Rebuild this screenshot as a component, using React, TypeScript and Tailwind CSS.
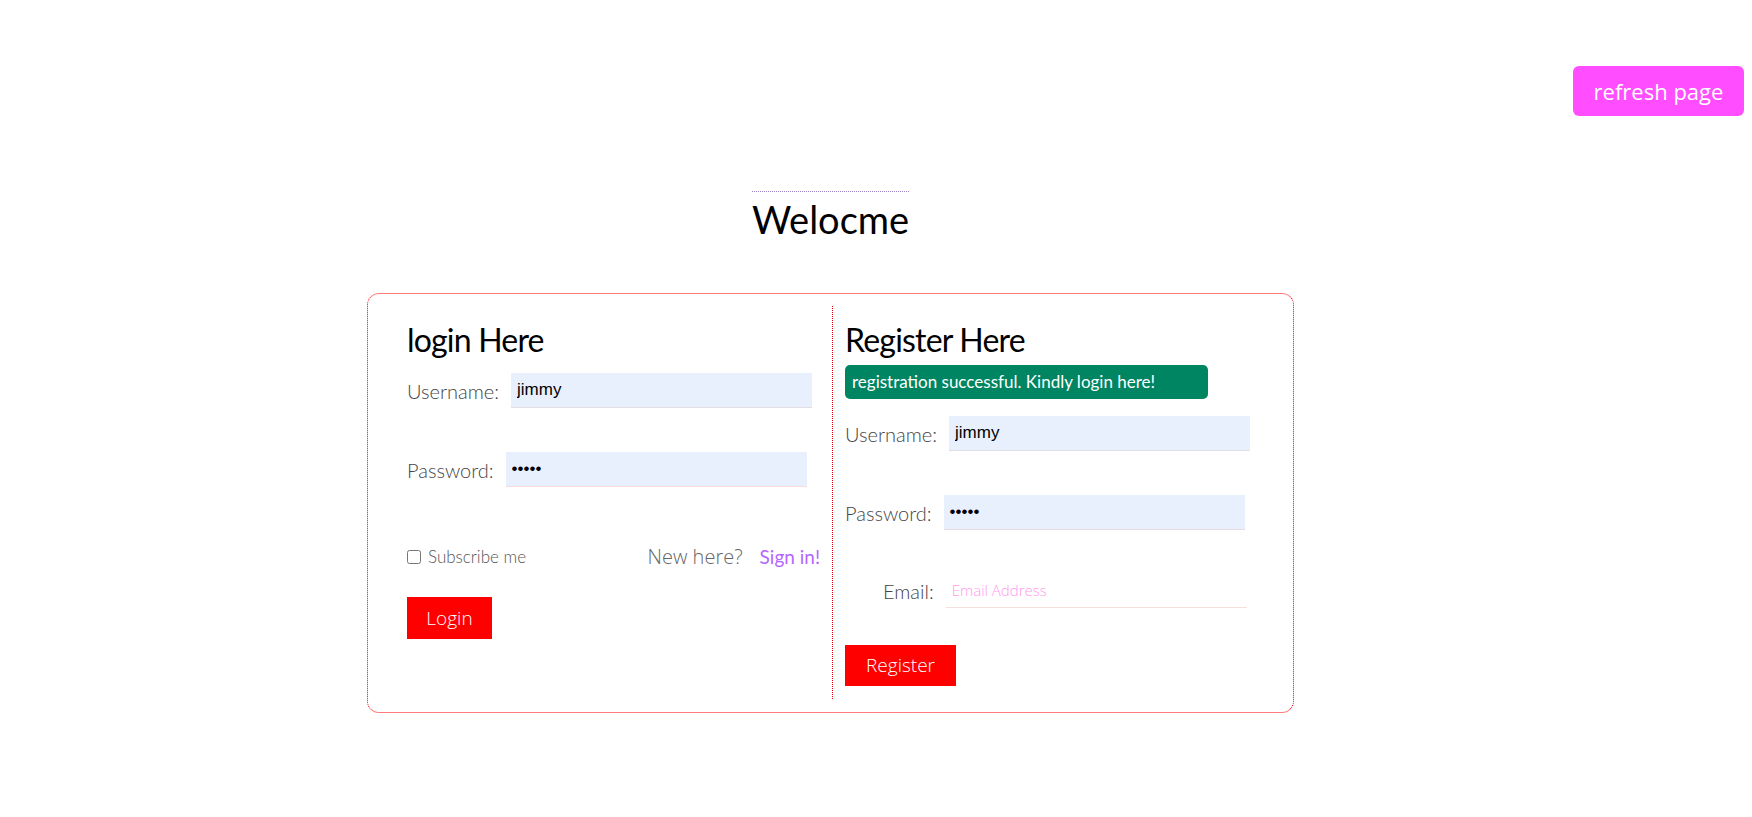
import React, { useState } from 'react';

const labelCls = "font-['Lato',sans-serif] font-light text-[20px] text-[#444]";
const inputCls =
  "w-[301px] h-[35px] ml-[12px] px-[6px] bg-[#e8f0fe] border-b border-[#e3dde3] text-[17px] text-black font-['Liberation_Sans',Arial,sans-serif] outline-none";

const App: React.FC = () => {
  const [loginUser, setLoginUser] = useState('jimmy');
  const [loginPass, setLoginPass] = useState('12345');
  const [regUser, setRegUser] = useState('jimmy');
  const [regPass, setRegPass] = useState('12345');
  const [email, setEmail] = useState('');

  return (
    <div className="min-h-[817px] bg-white">
      {/* top bar */}
      <div className="flex justify-end pt-[66px] pr-[8px]">
        <button className="w-[171px] h-[50px] rounded-[6px] bg-[#ff4dff] text-white text-[22px] font-['Open_Sans',sans-serif]">
          refresh page
        </button>
      </div>

      <div className="pl-[367px] w-[1294px]">
        {/* heading */}
        <div className="flex justify-center mt-[75px]">
          <h1 className="border-t border-dotted border-[#9b85c4] pt-[3px] text-[38px] leading-[48px] text-black font-['Lato',sans-serif]">
            Welocme
          </h1>
        </div>

        {/* card */}
        <div className="mt-[50px] w-[927px] h-[420px] rounded-[12px] border border-dotted border-x-red-600 border-y-[#ff7a7a] [border-top-style:solid] [border-bottom-style:solid] flex pt-[12px] pb-[13px]">
          {/* login */}
          <div className="w-[465px] border-r border-dotted border-red-600 pl-[39px] flex flex-col">
            <h2 className="text-[32px] leading-[40px] tracking-[-0.8px] mt-[14px] text-black font-['Lato',sans-serif]">login Here</h2>
            <div className="flex items-center mt-[13px]">
              <label className={labelCls}>Username:</label>
              <input className={inputCls} value={loginUser} onChange={(e) => setLoginUser(e.target.value)} />
            </div>
            <div className="flex items-center mt-[44px]">
              <label className={labelCls}>Password:</label>
              <input type="password" className={inputCls + ' border-[#f7dcdc]'} value={loginPass} onChange={(e) => setLoginPass(e.target.value)} />
            </div>
            <div className="flex items-center justify-between mt-[55px] pr-[12px]">
              <label className="flex items-center gap-[7px] text-[17px] font-light text-[#555] font-['Lato',sans-serif]">
                <input type="checkbox" className="w-[14px] h-[14px]" />
                Subscribe me
              </label>
              <div className="flex items-center gap-[17px] text-[19px] font-['Lato',sans-serif]">
                <span className="font-light text-[20px] text-[#666] font-['Open_Sans',sans-serif]">New here?</span>
                <a href="#" className="text-[#b366ff]">Sign in!</a>
              </div>
            </div>
            <button className="mt-[25px] w-[85px] h-[42px] bg-[#ff0000] text-white text-[19px] font-light font-['Open_Sans',sans-serif]">
              Login
            </button>
          </div>

          {/* register */}
          <div className="flex-1 pl-[12px] flex flex-col">
            <h2 className="text-[32px] leading-[40px] tracking-[-0.8px] mt-[14px] text-black font-['Lato',sans-serif]">Register Here</h2>
            <div className="mt-[5px] w-[363px] h-[34px] rounded-[5px] bg-[#008563] text-white text-[17px] font-['Lato',sans-serif] px-[7px] flex items-center">
              registration successful. Kindly login here!
            </div>
            <div className="flex items-center mt-[17px]">
              <label className={labelCls}>Username:</label>
              <input className={inputCls} value={regUser} onChange={(e) => setRegUser(e.target.value)} />
            </div>
            <div className="flex items-center mt-[44px]">
              <label className={labelCls}>Password:</label>
              <input type="password" className={inputCls} value={regPass} onChange={(e) => setRegPass(e.target.value)} />
            </div>
            <div className="flex items-center mt-[43px] pl-[38px]">
              <label className={labelCls}>Email:</label>
              <input
                placeholder="Email Address"
                className="w-[301px] h-[35px] ml-[12px] px-[6px] border-b border-[#f5dede] text-[15px] font-['Open_Sans',sans-serif] font-light placeholder:text-[#ff99ee] outline-none"
                value={email}
                onChange={(e) => setEmail(e.target.value)}
              />
            </div>
            <button className="mt-[37px] w-[111px] h-[41px] bg-[#ff0000] text-white text-[19px] font-light font-['Open_Sans',sans-serif]">
              Register
            </button>
          </div>
        </div>
      </div>
    </div>
  );
};

export default App;
